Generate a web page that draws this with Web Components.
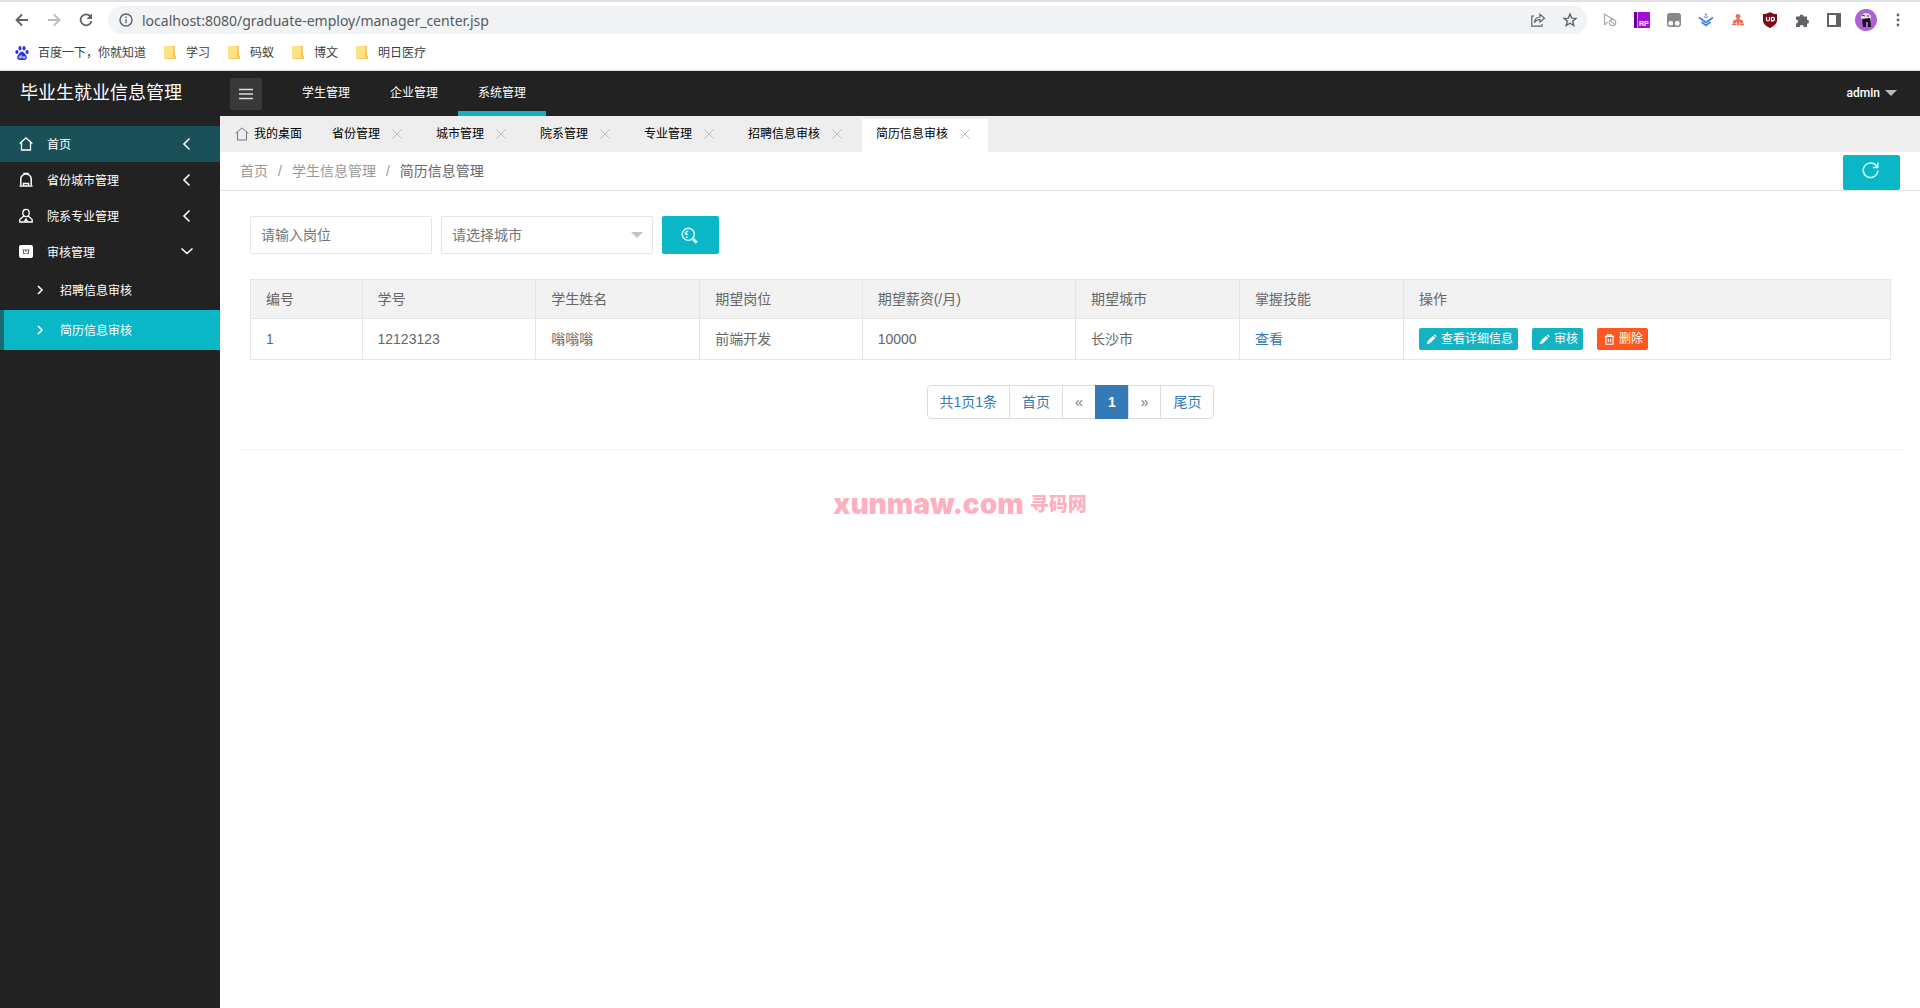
<!DOCTYPE html>
<html lang="zh-CN">
<head>
<meta charset="utf-8">
<title>毕业生就业信息管理</title>
<style>
html,body{height:100%}
body{margin:0;background:#fff;color:#333;font:12px/20px "Liberation Sans","Noto Sans CJK SC",sans-serif}
</style>
</head>
<body>
<app-window></app-window>
<script>
const ICONS={
back:'<path d="M13 7H2M7 1.500 1.500 7 7 12.500"/>',
forward:'<path d="M1 7h11M7 1.500 12.500 7 7 12.500"/>',
reload:'<path d="M11.300 3.200A5.500 5.500 0 1 0 12.500 8"/><path d="M13 .5v5.500H7.500z" fill="currentColor" stroke="none"/>',
info:'<circle cx="7" cy="7" r="6"/><path d="M7 6.200v4M7 3.500v1.500"/>',
share:'<path d="M3 3H.8v10.200H11V11M3.500 9.500c.4-4 2.500-5.500 5.500-5.500V1.300L13.500 5.300 9 9V6.500c-2.500 0-4 .8-5.500 3z"/>',
star:'<path d="m7 1 1.700 4.100 4.300.3-3.300 2.800 1.100 4.300L7 10.200l-3.800 2.300 1.100-4.300L1 5.400l4.300-.3z"/>',
cursor:'<path d="M1.500 12V1L10 6.500M1.500 12l3-3"/><circle cx="9.500" cy="9.500" r="3.200"/><path d="m7.300 7.300 4.500 4.500"/>',
tamper:'<rect x="0" y="0" width="14" height="14" rx="3" fill="currentColor" stroke="none"/><rect x="1.500" y="8" width="4.500" height="4.500" rx="1.500" fill="#fff" stroke="none"/><rect x="8" y="8" width="4.500" height="4.500" rx="1.500" fill="#fff" stroke="none"/>',
layers:'<path d="m0 4.500 7 5 7-5M2.500 9 7 12.500 11.500 9"/><path d="M5 3.300 7 4.800l2-1.500" stroke-width="1"/><circle cx="7" cy="1.500" r="1" fill="currentColor" stroke="none"/>',
tree:'<g fill="currentColor" stroke="none"><circle cx="7" cy="2.700" r="2.800"/><path d="M5.500 5h3v8h-3zM2 7.500 7 5l5 2.500V9H2z"/><circle cx="3" cy="9" r="2"/><circle cx="11" cy="9" r="2"/><path d="M0 11h4.800v2H0zM9.200 11H14v2H9.200z"/></g>',
puzzle:'<path fill="currentColor" stroke="none" d="M1 3.500h3.500a2 2 0 1 1 4 0H12v3.300a2 2 0 1 1 0 4V14H8.700a2 2 0 0 0-4 0H1v-3.500a2 2 0 0 0 0-4z"/>',
panel:'<rect x="1" y="1" width="12" height="12" stroke-width="2"/><path fill="currentColor" stroke="none" d="M9 1h4v12H9z"/>',
dots:'<g fill="currentColor" stroke="none"><circle cx="7" cy="2" r="1.400"/><circle cx="7" cy="7" r="1.400"/><circle cx="7" cy="12" r="1.400"/></g>',
paw:'<g fill="currentColor" stroke="none"><ellipse cx="1.900" cy="6" rx="1.600" ry="2.100"/><ellipse cx="5" cy="2.300" rx="1.500" ry="2.200"/><ellipse cx="9" cy="2.300" rx="1.500" ry="2.200"/><ellipse cx="12.100" cy="6" rx="1.600" ry="2.100"/><path d="M7 5.600c1.500 0 2 1.500 3.300 2.700 2.700 2.400 1.600 5.700-1 5.700H4.700c-2.600 0-3.700-3.300-1-5.700C5 7.100 5.500 5.600 7 5.600z"/></g><path d="M6.200 9v3H4.800c-1.200 0-1.200-1.800 0-1.800h1.400M8 10v2h2v-2" stroke="#fff" stroke-width=".8"/>',
folder:'<rect x="1" y="0" width="11" height="13" rx="1" fill="#ffe18a" stroke="none"/><path d="M10 0h2v9l1 1v3H2" fill="#f4c95a" stroke="none"/><path d="M1 0h9v12H1z" fill="#ffe18a" stroke="none"/>',
home:'<path d="M.6 6.500 7 .9l6.400 5.600M2.500 5v8h9V5"/>',
bag:'<path d="M1.800 12V6a5.200 5 0 0 1 10.400 0v6M.5 13h13M5 1.500V.5h4v1M4.500 13v-2.500h5V13" stroke-width="1.500"/>',
user:'<ellipse cx="7" cy="4" rx="3.200" ry="3.600"/><path d="M4.800 7 .8 10.500V13h12.400v-2.500L9.200 7M5 13l2-3 2 3"/>',
audit:'<rect x="0" y="0" width="14" height="13" rx="2" fill="#fff" stroke="none"/><path d="M4.500 5v4M9.500 5v4M3.500 5h7M4.500 8.500h2M7.500 8.500h2M7 5v2" stroke="#66686c" stroke-width="1"/>',
left:'<path d="M9.500 1.500 4 7l5.500 5.500"/>',
right:'<path d="M5 3l4 4-4 4"/>',
down:'<path d="m1.500 3.500 5.500 5 5.500-5"/>',
menu:'<path d="M0 2.500h14M0 7h14M0 11.500h14"/>',
close:'<path d="m2.500 2.500 9 9M11.500 2.500l-9 9"/>',
search:'<circle cx="6" cy="6" r="5"/><path d="M6 3.500a2.500 2.500 0 0 0-2.500 2.500M3.500 6h2M4 8.200h1.500"/><path d="m10 10 3 3" stroke-width="2.400"/>',
refresh:'<path d="M12.300 4A6 6 0 1 0 13 7M13 .5v4H9"/>',
pencil:'<path d="m1 13 1.200-4L9 2.200 11.800 5 5 11.800zM10 1.200 11 .3l2.700 2.700-.9 1z" fill="currentColor" stroke="none"/>',
trash:'<path d="M1 3h12M4.500 3V1h5v2M2.500 3.500V13h9V3.500M5.500 6v4.500M8.500 6v4.500" stroke-width="1.500"/>'
};
const define=(tag,css,html)=>customElements.define(tag,class extends HTMLElement{
  constructor(){
    super();
    const t=document.createElement('template');
    t.innerHTML=`<style>:host{display:block;box-sizing:border-box}*{box-sizing:border-box}button,input,select{font:inherit;color:inherit;border:0;margin:0;padding:0;background:none;border-radius:0}a{color:inherit;text-decoration:none}${css}</style>${typeof html==='function'?html(this):html}`;
    this.attachShadow({mode:'open'}).append(t.content.cloneNode(true));
  }
});
customElements.define('ui-icon',class extends HTMLElement{
  connectedCallback(){
    if(this.shadowRoot)return;
    const s=this.getAttribute('size')||14,w=this.getAttribute('weight')||1.4;
    this.attachShadow({mode:'open'}).innerHTML=`<style>:host{display:inline-block;flex:none;width:${s}px;height:${s}px}svg{display:block;overflow:visible}</style><svg width="${s}" height="${s}" viewBox="0 0 14 14" fill="none" stroke="currentColor" stroke-width="${w}" aria-hidden="true">${ICONS[this.getAttribute('name')]}</svg>`;
  }
});
define('browser-toolbar',`
:host{border-top:2px solid #dee1e6;height:38px;display:flex;align-items:center;padding:0 6px;color:#5f6368;background:#fff}
button{width:32px;height:32px;display:grid;place-items:center;flex:none}
form{flex:1;height:28px;margin:0 7px 0 6px;border-radius:14px;background:#f1f3f4;display:flex;align-items:center;padding:0 1px 0 2px}
input{flex:1;min-width:0;height:28px;font:14px "Noto Sans","Open Sans",sans-serif;color:#555a5f;outline:0}
.dim{color:#b9bbbe}.pale{color:#aaa}.gray{color:#888}.blue{color:#3b82e0}.red{color:#e8714f}
`,`
<button aria-label="后退"><ui-icon name="back" weight="1.800"></ui-icon></button>
<button class="dim" aria-label="前进"><ui-icon name="forward" weight="1.800"></ui-icon></button>
<button aria-label="刷新"><ui-icon name="reload" weight="1.800"></ui-icon></button>
<form><button type="button" aria-label="网站信息"><ui-icon name="info"></ui-icon></button><input aria-label="地址" value="localhost:8080/graduate-employ/manager_center.jsp"><button type="button" aria-label="分享"><ui-icon name="share" weight="1.200"></ui-icon></button><button type="button" aria-label="收藏"><ui-icon name="star"></ui-icon></button></form>
<button class="pale" aria-label="指针"><ui-icon name="cursor" weight="1.200"></ui-icon></button>
<button aria-label="Axure RP"><svg width="16" height="16"><path fill="#a50bd2" d="M0 0h16v16H0z"/><path fill="#6500a8" d="M0 0h4v16H0z"/><path fill="#d88be9" d="M3 0h1v16H3z"/><text x="5" y="14" font-family="Liberation Sans" font-weight="bold" font-size="7" fill="#fff">RP</text></svg></button>
<button class="gray" aria-label="脚本"><ui-icon name="tamper"></ui-icon></button>
<button class="blue" aria-label="图层"><ui-icon name="layers" weight="1.600"></ui-icon></button>
<button class="red" aria-label="结构"><ui-icon name="tree" size="12"></ui-icon></button>
<button aria-label="uBlock"><svg width="14" height="16"><path fill="#7f0a12" d="M7 0c2 1.500 4 2 7 2v6c0 4-3 6-7 8-4-2-7-4-7-8V2c3 0 5-.5 7-2z"/><path d="M3.500 5v2.500q0 1.500 1.500 1.500t1.500-1.500V5M8.500 9V5.500q3-.5 3 1.500T8.500 9z" fill="none" stroke="#fff" stroke-width="1.200"/></svg></button>
<button aria-label="扩展程序"><ui-icon name="puzzle"></ui-icon></button>
<button aria-label="侧边栏"><ui-icon name="panel"></ui-icon></button>
<button aria-label="用户"><svg width="22" height="22"><circle cx="11" cy="11" r="11" fill="#ad62d4"/><path d="M6 8q1-4 5-4t5 4l-1 4H7z" fill="#e6deec"/><path d="M7 10l8-1 1 9h-3v-5h-2v5H8z" fill="#15101c"/><path d="m7 6 3 1M12 7h2" stroke="#333"/></svg></button>
<button aria-label="菜单"><ui-icon name="dots"></ui-icon></button>
`);
define('bookmark-link',`a{display:flex;align-items:center;gap:9px;color:#3c4043;white-space:nowrap}ui-icon{color:#2b32d8}`,
el=>`<a href="#"><ui-icon name="${el.getAttribute('icon')||'folder'}"></ui-icon><slot></slot></a>`);
define('bookmark-bar',`:host{display:flex;align-items:center;gap:17px;height:33px;padding:0 15px 3px;border-bottom:1px solid #dadce0;background:#fff}`,`
<bookmark-link icon="paw">百度一下，你就知道</bookmark-link><bookmark-link>学习</bookmark-link><bookmark-link>码蚁</bookmark-link><bookmark-link>博文</bookmark-link><bookmark-link>明日医疗</bookmark-link>`);
define('app-header',`
:host{display:flex;align-items:center;height:45px;background:#222;color:#fff;padding-right:23px}
h1{margin:0;width:230px;padding-left:20px;font-size:18px;font-weight:400;line-height:45px;white-space:nowrap}
.menu{width:32px;height:32px;border-radius:2px;background:#393939;display:grid;place-items:center;color:#ddd}
nav{display:flex;margin-left:20px;flex:1;align-self:stretch}
nav a{padding:0 20px;line-height:45px;border-bottom:5px solid transparent;height:45px}
nav a.on{border-color:#18b0bf}
.me{display:flex;gap:5px;align-items:center;height:28px;padding-bottom:2px;font:500 12px Roboto,sans-serif}
i{border:6px solid transparent;border-top-color:#bbb;border-bottom:0}
`,`<h1>毕业生就业信息管理</h1><button class="menu" aria-label="折叠菜单"><ui-icon name="menu"></ui-icon></button>
<nav><a href="#">学生管理</a><a href="#">企业管理</a><a class="on" href="#">系统管理</a></nav><button class="me">admin<i></i></button>`);
define('side-item',`
a{display:flex;align-items:center;height:36px;padding:0 26px 0 19px;color:#fff}
span{flex:1;padding:1px 0 0 14px}
:host([current]) a{background:#1a5158}
:host([sub]) a{height:40px;padding-left:29px;border-left:4px solid transparent}
:host([sub]) span{padding:2px 0 0 13px}
:host([active]) a{background:#09b7c7;border-color:#1a6a74}
`,el=>el.hasAttribute('sub')?`<a href="#"><ui-icon name="right" weight="1.600"></ui-icon><span><slot></slot></span></a>`:
`<a href="#"><ui-icon name="${el.getAttribute('icon')}" weight="1.300"></ui-icon><span><slot></slot></span><ui-icon name="${el.hasAttribute('open')?'down':'left'}" weight="1.600"></ui-icon></a>`);
define('side-menu',`:host{width:220px;flex:none;background:#222;padding-top:10px}`,`<nav>
<side-item icon="home" current>首页</side-item><side-item icon="bag">省份城市管理</side-item><side-item icon="user">院系专业管理</side-item><side-item icon="audit" open>审核管理</side-item><side-item sub>招聘信息审核</side-item><side-item sub active>简历信息审核</side-item></nav>`);
define('page-tab',`
:host{display:flex;align-items:center;height:33px;padding:0 16px 3px 14px;color:#000}
:host([active]){background:#fff}
:host([home]){padding-right:14px}
button{height:30px;white-space:nowrap;display:flex;align-items:center;gap:5px}
.x{padding-left:10px;color:#bbb}.h{color:#777}
`,el=>el.hasAttribute('home')?'<button><ui-icon class="h" name="home" weight="1"></ui-icon><slot></slot></button>':'<button><slot></slot></button><button class="x" aria-label="关闭标签"><ui-icon name="close" weight="1"></ui-icon></button>');
define('page-tabs',`:host{display:flex;align-items:flex-end;gap:2px;height:36px;background:#eee;padding-left:1px}`,`
<page-tab home>我的桌面</page-tab><page-tab>省份管理</page-tab><page-tab>城市管理</page-tab><page-tab>院系管理</page-tab><page-tab>专业管理</page-tab><page-tab>招聘信息审核</page-tab><page-tab active>简历信息审核</page-tab>`);
define('crumb-bar',`
:host{display:flex;align-items:flex-end;justify-content:space-between;height:39px;padding:0 20px;border-bottom:1px solid #e5e5e5;font-size:14px}
nav{line-height:38px;color:#999;display:flex;gap:10px}b{font-weight:400;color:#666}
button{width:57px;height:35px;background:#09b7c7;color:#d8fbff;display:grid;place-items:center;padding:0 2px 4px 0;border-radius:2px}
`,`<nav><a href="#">首页</a><span>/</span><a href="#">学生信息管理</a><span>/</span><b>简历信息管理</b></nav><button aria-label="刷新页面"><ui-icon name="refresh" size="17" weight="1.300"></ui-icon></button>`);
define('search-form',`
form{display:flex;gap:9px;font-size:14px;color:#757575}
input,select{height:38px;border:1px solid #e6e6e6;border-radius:2px;padding:0 10px;width:100%;background:#fff;outline:0;display:block}
select{appearance:none}input::placeholder{color:#757575;opacity:1}
.t{width:182px}.s{width:212px;position:relative}
.s::after{content:"";position:absolute;right:10px;top:16px;border:6px solid transparent;border-top-color:#c2c2c2;border-bottom:0;pointer-events:none}
button{width:57px;height:38px;border-radius:2px;background:#09b7c7;color:#d8fbff;display:grid;place-items:center;padding-right:2px}
`,`<form><label class="t"><input aria-label="岗位" placeholder="请输入岗位"></label><label class="s"><select aria-label="城市"><option>请选择城市</option></select></label><button type="button" aria-label="搜索"><ui-icon name="search" size="17" weight="1.200"></ui-icon></button></form>`);
define('action-button',`
button{display:flex;align-items:center;gap:4px;height:22px;padding:0 5px 0 7px;border-radius:2px;background:#13b3c3;color:#fff;font-size:12px;white-space:nowrap}
:host([danger]) button{background:#ff5722}`,el=>`<button><ui-icon size="11" name="${el.hasAttribute('danger')?'trash':'pencil'}"></ui-icon><slot></slot></button>`);
define('resume-table',`
table{width:100%;border-collapse:collapse;table-layout:fixed;font-size:14px;color:#666}
th,td{border:1px solid #e6e6e6;padding:0 15px;height:39px;text-align:left;font-weight:400;white-space:nowrap}
td{height:41px}
th{background:#f2f2f2}td a{color:#337ab7}.ops{display:flex;gap:14px}
`,`<table><colgroup><col style="width:6.8%"><col style="width:10.6%"><col style="width:10%"><col style="width:9.9%"><col style="width:13%"><col style="width:10%"><col style="width:10%"><col></colgroup>
<thead><tr><th>编号</th><th>学号</th><th>学生姓名</th><th>期望岗位</th><th>期望薪资(/月)</th><th>期望城市</th><th>掌握技能</th><th>操作</th></tr></thead>
<tbody><tr><td>1</td><td>12123123</td><td>嗡嗡嗡</td><td>前端开发</td><td>10000</td><td>长沙市</td><td><a href="#">查看</a></td><td><div class="ops"><action-button>查看详细信息</action-button><action-button>审核</action-button><action-button danger>删除</action-button></div></td></tr></tbody></table>`);
define('page-nav',`
:host{display:flex;justify-content:center}
nav{display:flex;font-size:14px;color:#337ab7}
a{border:1px solid #ddd;margin-left:-1px;height:34px;line-height:32px;padding:0 12px}
a:first-child{margin-left:0;border-radius:4px 0 0 4px}a:last-child{border-radius:0 4px 4px 0}
.on{background:#337ab7;border-color:#337ab7;color:#fff;font-weight:700}.ar{color:#777}
`,`<nav aria-label="分页"><a href="#">共1页1条</a><a href="#">首页</a><a class="ar" href="#">«</a><a class="on" href="#">1</a><a class="ar" href="#">»</a><a href="#">尾页</a></nav>`);
define('water-mark',`
:host{position:fixed;inset:0;display:flex;align-items:center;justify-content:center;gap:6px;color:#ffb0bf;pointer-events:none;font-weight:900}
b{font:900 28px/28px Inter,sans-serif}span{font-size:19px;line-height:24px;padding-top:2px}`,`<b>xunmaw.com</b><span>寻码网</span>`);
define('app-window',`
:host{display:flex;flex-direction:column;min-height:100vh}
.body{display:flex;flex:1}main{flex:1;min-width:0}
section{padding:25px 29px 0 30px}resume-table{margin:25px 0}
hr{border:0;border-top:1px solid #f6f6f6;margin:30px 15px 0 20px}
`,`<browser-toolbar></browser-toolbar><bookmark-bar></bookmark-bar><app-header></app-header>
<div class="body"><side-menu></side-menu><main><page-tabs></page-tabs><crumb-bar></crumb-bar><section><search-form></search-form><resume-table></resume-table><page-nav></page-nav></section><hr></main></div><water-mark></water-mark>`);
</script>
</body>
</html>
